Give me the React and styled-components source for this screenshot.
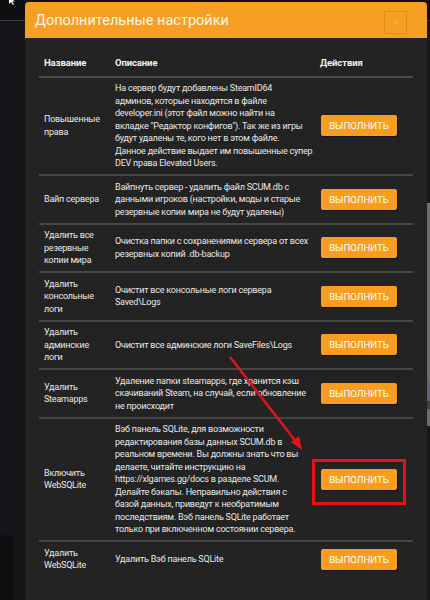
import React from 'react';
import styled, { createGlobalStyle } from 'styled-components';

const GlobalStyle = createGlobalStyle`
  html, body {
    margin: 0;
    padding: 0;
    background: #141518;
  }
  * {
    box-sizing: border-box;
  }
`;

const rows = [
  {
    name: ['Повышенные', 'права'],
    desc: [
      'На сервер будут добавлены SteamID64',
      'админов, которые находятся в файле',
      'developer.ini (этот файл можно найти на',
      'вкладке "Редактор конфигов"). Так же из игры',
      'будут удалены те, кого нет в этом файле.',
      'Данное действие выдает им повышенные супер',
      'DEV права Elevated Users.',
    ],
  },
  {
    name: ['Вайп сервера'],
    desc: [
      'Вайпнуть сервер - удалить файл SCUM.db с',
      'данными игроков (настройки, моды и старые',
      'резервные копии мира не будут удалены)',
    ],
  },
  {
    name: ['Удалить все', 'резервные', 'копии мира'],
    desc: ['Очистка папки с сохранениями сервера от всех', 'резервных копий .db-backup'],
  },
  {
    name: ['Удалить', 'консольные', 'логи'],
    desc: ['Очистит все консольные логи сервера', 'Saved\\Logs'],
  },
  {
    name: ['Удалить', 'админские', 'логи'],
    desc: ['Очистит все админские логи SaveFiles\\Logs'],
  },
  {
    name: ['Удалить', 'Steamapps'],
    desc: [
      'Удаление папки steamapps, где хранится кэш',
      'скачиваний Steam, на случай, если обновление',
      'не происходит',
    ],
  },
  {
    name: ['Включить', 'WebSQLite'],
    highlight: true,
    desc: [
      'Вэб панель SQLite, для возможности',
      'редактирования базы данных SCUM.db в',
      'реальном времени. Вы должны знать что вы',
      'делаете, читайте инструкцию на',
      'https://xlgames.gg/docs в разделе SCUM.',
      'Делайте бэкапы. Неправильно действия с',
      'базой данных, приведут к необратимым',
      'последствиям. Вэб панель SQLite работает',
      'только при включенном состоянии сервера.',
    ],
  },
  {
    name: ['Удалить', 'WebSQLite'],
    desc: ['Удалить Вэб панель SQLite'],
  },
];

const App = () => {
  return (
    <>
      <GlobalStyle />
      <Page>
        <TopBar>
          <Cursor viewBox="0 0 8 8">
            <path d="M1 0 L1 7 L3 5 L5 8 L6 7 L4 4.5 L7 4.5 Z" fill="#fff" />
          </Cursor>
        </TopBar>
        <Backdrop>
          <LeftArea>
            <BottomBlock />
          </LeftArea>
          <RightRail>
            <RailPanel>
              <RailStripe $tone="#5d6372" />
            </RailPanel>
          </RightRail>
        </Backdrop>

        <Modal>
          <ModalHeader>
            <ModalTitle>Дополнительные настройки</ModalTitle>
            <CloseButton>×</CloseButton>
          </ModalHeader>
          <ModalBody>
            <Table>
              <colgroup>
                <col style={{ width: 71 }} />
                <col style={{ width: 205 }} />
                <col />
              </colgroup>
              <thead>
                <tr>
                  <Th>Название</Th>
                  <Th>Описание</Th>
                  <Th>Действия</Th>
                </tr>
              </thead>
              <tbody>
                {rows.map((row, i) => (
                  <tr key={i}>
                    <Td>
                      {row.name.map((line, j) => (
                        <Line key={j}>{line}</Line>
                      ))}
                    </Td>
                    <Td>
                      {row.desc.map((line, j) => (
                        <Line key={j}>{line}</Line>
                      ))}
                    </Td>
                    <Td>
                      {row.highlight ? (
                        <Highlight>
                          <RunButton>Выполнить</RunButton>
                        </Highlight>
                      ) : (
                        <RunButton>Выполнить</RunButton>
                      )}
                    </Td>
                  </tr>
                ))}
              </tbody>
            </Table>
          </ModalBody>
        </Modal>

        {/* red annotation arrow */}
        <Arrow viewBox="0 0 430 600">
          <line x1="230" y1="357" x2="297" y2="443" stroke="#e5141c" strokeWidth="2.4" />
          <polygon points="302,450 291,442 299,436" fill="#e5141c" />
        </Arrow>
      </Page>
    </>
  );
};

const Page = styled.div`
  position: relative;
  width: 430px;
  height: 600px;
  overflow: hidden;
  background: #141518;
  font-family: Roboto, "Noto Sans", sans-serif;
  display: flex;
  flex-direction: column;
`;

const TopBar = styled.div`
  height: 21px;
  background: #0e0f11;
  border-bottom: 1px solid #3a3b3d;
  padding-left: 8px;
`;

const Cursor = styled.svg`
  width: 8px;
  height: 8px;
  margin-top: -3px;
  display: block;
`;

const Backdrop = styled.div`
  flex: 1;
  display: flex;
`;

const LeftArea = styled.div`
  flex: 1;
  display: flex;
  flex-direction: column;
  justify-content: flex-end;
`;

const BottomBlock = styled.div`
  width: 13px;
  height: 65px;
  background: #0e0f11;
`;

const RightRail = styled.div`
  width: 3px;
  padding-top: 182px;
  background: #17181a;
`;

const RailPanel = styled.div`
  height: 223px;
  background: #6b6b6b;
  border-top: 1px solid #808080;
  display: flex;
  flex-direction: column;
  justify-content: flex-end;
  padding-bottom: 17px;
`;

const RailStripe = styled.div`
  height: 29px;
  background: ${(p) => p.$tone};
  border-bottom: 8px solid #3c3e44;
`;

const Modal = styled.div`
  position: absolute;
  left: 25px;
  top: 2px;
  width: 402px;
  height: 610px;
  background: #232323;
  border-radius: 4px 4px 0 0;
  display: flex;
  flex-direction: column;
`;

const ModalHeader = styled.div`
  height: 36px;
  background: #f79f22;
  border-radius: 4px 4px 0 0;
  display: flex;
  align-items: center;
  justify-content: space-between;
  padding: 0 20px 0 10px;
`;

const ModalTitle = styled.h4`
  margin: 0;
  font-size: 14.5px;
  font-weight: 400;
  color: #fff7ea;
`;

const CloseButton = styled.div`
  width: 23px;
  height: 23px;
  margin-top: 5px;
  border: 1px solid #e08c16;
  color: #f0b060;
  font-size: 9px;
  line-height: 1;
  display: flex;
  align-items: center;
  justify-content: center;
`;

const ModalBody = styled.div`
  padding: 12px 14px;
`;

const Table = styled.table`
  width: 100%;
  border-collapse: collapse;
  table-layout: fixed;
  color: #e8e8e8;
  font-size: 9px;
  letter-spacing: -0.22px;
  line-height: 12.5px;
`;

const Th = styled.th`
  text-align: left;
  font-weight: 700;
  font-size: 9.5px;
  letter-spacing: -0.1px;
  padding: 7px 5px 6px;
  border-bottom: 2px solid #4a4a4a;
  color: #f2f2f2;
`;

const Td = styled.td`
  padding: 4.5px 5px;
  vertical-align: middle;
  border-top: 2px solid #464646;
  white-space: nowrap;
  tr:first-child > & {
    border-top: none;
  }
`;

const Line = styled.span`
  display: block;
`;

const RunButton = styled.button`
  display: inline-block;
  width: 76px;
  height: 21px;
  padding: 0;
  margin-left: 1px;
  border: none;
  border-radius: 2px;
  background: #f89d1f;
  box-shadow: 1px 1px 0 rgba(0, 0, 0, 0.45);
  color: #fff;
  font-family: Roboto, "Noto Sans", sans-serif;
  font-size: 9.6px;
  text-transform: uppercase;
  letter-spacing: 0;
  vertical-align: middle;
`;

const Highlight = styled.div`
  display: inline-block;
  border: 3px solid #e3121b;
  padding: 7px 6px 12px 5px;
  margin: -10px -9px -15px -8px;
  line-height: 0;
`;

const Arrow = styled.svg`
  position: absolute;
  left: 0;
  top: 0;
  width: 430px;
  height: 600px;
  pointer-events: none;
`;

export default App;
